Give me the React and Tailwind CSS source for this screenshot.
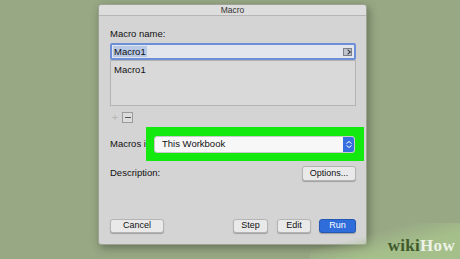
import React from 'react'

const font = { fontFamily: '"Liberation Sans", Arial, sans-serif' }

const Btn = ({ children, className = '' }) => (
  <div className={`flex items-center justify-center h-[14px] rounded-[3px] border border-[#b4b4b4] bg-[#e9e9e9] text-[9px] text-[#111] shadow-[0_1px_1px_rgba(0,0,0,0.25)] ${className}`}>
    {children}
  </div>
)

export default function App() {
  return (
    <div className="relative w-[460px] h-[259px] overflow-hidden bg-[#98a885] flex items-start" style={font}>
      {/* dialog */}
      <div className="ml-[98px] mt-[4px] w-[269px] h-[241px] rounded-[3px] border border-[#9ea294] bg-[#d4d4d4] shadow-[2px_3px_8px_rgba(40,50,30,0.45)] flex flex-col">
        <div className="h-[11px] shrink-0 flex items-center justify-center bg-[#dddddd] border-b border-[#b5b5b5] text-[8.5px] text-[#333] rounded-t-[3px]">
          Macro
        </div>
        <div className="flex-1 flex flex-col px-[11px] pr-[10px]">
          <div className="mt-[12px] text-[9.5px] text-[#111] leading-[12px]">Macro name:</div>
          <div className="mt-[3px] h-[17px] rounded-[2px] border-2 border-[#6d8fd8] bg-[#e3e6ec] flex items-center pl-[1px] pr-[2px]">
            <span className="bg-[#b8c9e6] text-[9.5px] text-[#111] px-[1px] leading-[11px]">Macro1</span>
            <div className="ml-auto w-[9px] h-[8px] bg-[#bfc4cc] border border-[#7c8088] relative">
              <div className="absolute left-[2px] top-[1px] w-[4px] h-[4px] border-r border-b border-[#333] rotate-[-45deg]" />
            </div>
          </div>
          <div className="h-[46px] border border-[#b3b3b3] bg-[#d9d9d9] px-[3px] pt-[3px] text-[9.5px] text-[#111] leading-[11px]">
            Macro1
          </div>
          <div className="mt-[6px] flex items-center gap-[2px] h-[11px]">
            <span className="w-[10px] text-center text-[11px] text-[#b6b6b6] leading-none">+</span>
            <div className="w-[11px] h-[11px] border border-[#9a9a9a] bg-[#dcdcdc] flex items-center justify-center">
              <div className="w-[6px] h-[1px] bg-[#555]" />
            </div>
          </div>
          <div className="relative mt-[13px] h-[17px] flex items-center">
            <span className="text-[9.5px] text-[#111]">Macros in:</span>
            <div className="absolute left-[36px] top-[-9px] w-[218px] h-[34px] bg-[#13e80f]" />
            <div className="absolute left-[44px] right-[1px] top-0 h-[17px] rounded-[3px] bg-[#f7f7f7] border border-[#c9c9c9] flex items-center pl-[7px]">
              <span className="text-[9.5px] text-[#111]">This Workbook</span>
              <div className="ml-auto w-[11px] h-[15px] rounded-r-[2px] bg-[#3670de] flex flex-col items-center justify-center gap-[1px]">
                <svg width="6" height="3" viewBox="0 0 6 3"><path d="M0.5 2.5 L3 0.5 L5.5 2.5" stroke="#fff" fill="none" strokeWidth="1" /></svg>
                <svg width="6" height="3" viewBox="0 0 6 3"><path d="M0.5 0.5 L3 2.5 L5.5 0.5" stroke="#fff" fill="none" strokeWidth="1" /></svg>
              </div>
            </div>
          </div>
          <div className="mt-[13px] flex items-center">
            <span className="text-[9.5px] text-[#111]">Description:</span>
            <Btn className="ml-auto w-[54px] h-[15px]">Options...</Btn>
          </div>
          <div className="mt-auto mb-[11px] flex items-center">
            <Btn className="w-[54px]">Cancel</Btn>
            <Btn className="ml-auto w-[35px]">Step</Btn>
            <Btn className="ml-[9px] w-[34px]">Edit</Btn>
            <div className="ml-[8px] w-[37px] h-[14px] rounded-[3px] bg-[#2f6ddb] border border-[#2557b5] flex items-center justify-center text-[9px] text-white shadow-[0_1px_1px_rgba(0,0,0,0.25)]">
              Run
            </div>
          </div>
        </div>
      </div>
      {/* wikiHow watermark */}
      <div className="absolute right-0 bottom-0 w-[150px] h-[36px] bg-[linear-gradient(165deg,rgba(152,168,133,0)_35%,#a5bf8a_65%)]" />
      <div className="absolute right-[5px] bottom-[5px] text-[17px] font-bold leading-none tracking-[0.3px]" style={{ fontFamily: '"Liberation Serif", serif' }}>
        <span className="text-[#3f5a2c]">wiki</span>
        <span className="text-[#eef2e6]">How</span>
      </div>
    </div>
  )
}
